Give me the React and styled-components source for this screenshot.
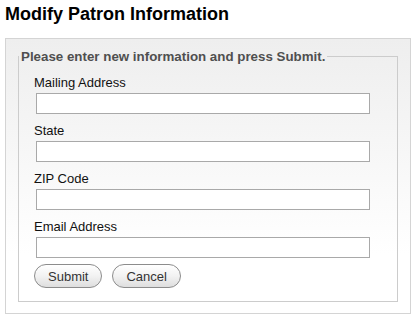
import styled, { createGlobalStyle } from "styled-components"

const GlobalStyle = createGlobalStyle`
  html, body {
    margin: 0;
    padding: 0;
    background: #ffffff;
    font-family: "Liberation Sans", Arial, sans-serif;
  }
`

const Page = styled.div`
  width: 415px;
  padding: 4px 0 0 0;
  box-sizing: border-box;
`

const Title = styled.h1`
  margin: 0 0 13px 5px;
  font-size: 18px;
  line-height: 21px;
  font-weight: bold;
  color: #000;
`

const Panel = styled.div`
  margin: 0 5px;
  width: 406px;
  box-sizing: border-box;
  border: 1px solid #d4d4d4;
  background: linear-gradient(to bottom, #eeeeee 0, #ffffff 215px);
  padding: 10px 12px 11px 12px;
`

const Fieldset = styled.fieldset`
  margin: 0;
  border: 1px solid #cccccc;
  padding: 11px 16px 13px 15px;
  min-width: 0;
`

const Legend = styled.legend`
  padding: 0 2px 0 2px;
  margin-left: -15px;
  font-size: 13.33px;
  line-height: 15px;
  font-weight: bold;
  color: #4f4f4f;
`

const Row = styled.div`
  display: flex;
  flex-direction: column;
  margin-bottom: 9px;
`

const Label = styled.label`
  font-size: 13px;
  line-height: 15px;
  color: #111111;
  margin-bottom: 3px;
`

const Input = styled.input`
  box-sizing: border-box;
  margin-left: 2px;
  width: 334px;
  height: 21px;
  border: 1px solid #a9a9a9;
  background: #ffffff;
  padding: 1px 3px;
  font-size: 13px;
  font-family: "Liberation Sans", Arial, sans-serif;
`

const Actions = styled.div`
  display: flex;
  gap: 10px;
  margin-top: -3px;
`

const Button = styled.button`
  box-sizing: border-box;
  height: 24px;
  padding: 0 13px;
  border: 1px solid #8c8c8c;
  border-radius: 12px;
  background: linear-gradient(to bottom, #ffffff 0%, #f2f2f2 50%, #dedede 100%);
  font-family: "Liberation Sans", Arial, sans-serif;
  font-size: 13px;
  color: #333333;
  cursor: pointer;
`

const fields = ["Mailing Address", "State", "ZIP Code", "Email Address"]

const App = () => {
  return (
    <Page>
      <GlobalStyle />
      <Title>Modify Patron Information</Title>
      <Panel>
        <Fieldset>
          <Legend>Please enter new information and press Submit.</Legend>
          {fields.map(name => (
            <Row key={name}>
              <Label>{name}</Label>
              <Input type="text" />
            </Row>
          ))}
          <Actions>
            <Button>Submit</Button>
            <Button>Cancel</Button>
          </Actions>
        </Fieldset>
      </Panel>
    </Page>
  )
}

export default App
